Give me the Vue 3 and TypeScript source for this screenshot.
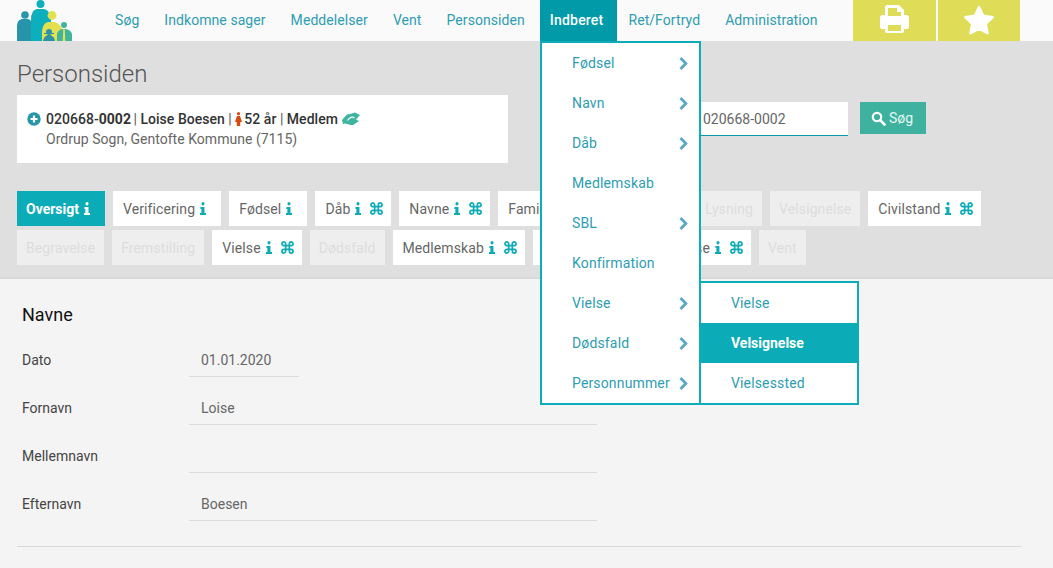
<script setup lang="ts">
interface Tab {
  label: string
  info?: boolean
  cmd?: boolean
  off?: boolean
  active?: boolean
}

const navItems = ['Søg', 'Indkomne sager', 'Meddelelser', 'Vent', 'Personsiden', 'Indberet', 'Ret/Fortryd', 'Administration']

const menuItems = [
  { label: 'Fødsel', more: true },
  { label: 'Navn', more: true },
  { label: 'Dåb', more: true },
  { label: 'Medlemskab', more: false },
  { label: 'SBL', more: true },
  { label: 'Konfirmation', more: false },
  { label: 'Vielse', more: true },
  { label: 'Dødsfald', more: true },
  { label: 'Personnummer', more: true }
]

const subItems = ['Vielse', 'Velsignelse', 'Vielsessted']

const tabs: Tab[] = [
  { label: 'Oversigt', info: true, active: true },
  { label: 'Verificering', info: true },
  { label: 'Fødsel', info: true },
  { label: 'Dåb', info: true, cmd: true },
  { label: 'Navne', info: true, cmd: true },
  { label: 'Familie', info: true },
  { label: 'Konfirmation', off: true },
  { label: 'Lysning', off: true },
  { label: 'Velsignelse', off: true },
  { label: 'Civilstand', info: true, cmd: true },
  { label: 'Begravelse', off: true },
  { label: 'Fremstilling', off: true },
  { label: 'Vielse', info: true, cmd: true },
  { label: 'Dødsfald', off: true },
  { label: 'Medlemskab', info: true, cmd: true },
  { label: 'Sognebånd', info: true },
  { label: 'Adresse', info: true, cmd: true },
  { label: 'Vent', off: true }
]

const fields = [
  { label: 'Dato', value: '01.01.2020', short: true },
  { label: 'Fornavn', value: 'Loise', short: false },
  { label: 'Mellemnavn', value: '', short: false },
  { label: 'Efternavn', value: 'Boesen', short: false }
]
</script>

<template>
  <div class="page">
    <header class="topbar">
      <svg class="logo" width="55" height="41" viewBox="0 0 55 41">
        <circle cx="8" cy="15" r="3.8" fill="#2795a9" />
        <path d="M0 41V26q0-6 5-7h6q4 1 4 7v15z" fill="#2795a9" />
        <circle cx="23.5" cy="4" r="4" fill="#0cb0bd" />
        <path d="M14 41V20q0-10 6-11h7q6 1 7 11v21z" fill="#0cb0bd" />
        <circle cx="35" cy="15.5" r="4.4" fill="#e2e04f" />
        <path d="M25 41V31q1-8 6-9h7q6 2 8 10v9z" fill="#e2e04f" />
        <circle cx="32" cy="32" r="3" fill="#2b93a8" />
        <path d="M27 33h10v1H27zM26 41q1-5 5-6h2q4 1 5 6z" fill="#2b93a8" />
        <circle cx="47" cy="25" r="3" fill="#3fb59f" />
        <path d="M40 41V34q1-4 5-5h4q5 1 6 5v7z" fill="#3fb59f" />
        <path d="M46.2 29h1.6l.5 12h-2.6z" fill="#e2e04f" />
      </svg>
      <nav class="nav">
        <a v-for="item in navItems" :key="item" class="nav-item" :class="{ current: item === 'Indberet' }">{{ item }}</a>
        <ul class="menu">
          <li v-for="item in menuItems" :key="item.label" class="menu-item">
            <span>{{ item.label }}</span>
            <svg v-if="item.more" class="chevron" width="9" height="13" viewBox="0 0 9 13">
              <path d="M1.500 1l5.300 5.500-5.300 5.500" fill="none" stroke="#5aa9c4" stroke-width="2.800" />
            </svg>
            <ul v-if="item.label === 'Vielse'" class="submenu">
              <li v-for="sub in subItems" :key="sub" class="sub-item" :class="{ current: sub === 'Velsignelse' }">{{ sub }}</li>
            </ul>
          </li>
        </ul>
      </nav>
      <div class="actions">
        <button class="action" aria-label="Print">
          <svg width="29" height="29" viewBox="0 0 29 29">
            <path
              fill="#fff"
              fill-rule="evenodd"
              d="M5 2a2 2 0 0 1 2-2h12l5 5v5h2a3 3 0 0 1 3 3v9a2 2 0 0 1-2 2h-3v2a2 2 0 0 1-2 2H7a2 2 0 0 1-2-2v-2H2a2 2 0 0 1-2-2v-9a3 3 0 0 1 3-3h2zM8 3v8h13V7h-4V3zM8 20v6h13v-6z"
            />
          </svg>
        </button>
        <button class="action" aria-label="Favorit">
          <svg width="32" height="30" viewBox="0 0 32 30">
            <path
              fill="#fff"
              stroke="#fff"
              stroke-width="2.4"
              stroke-linejoin="round"
              d="M16 2l4.2 8.8 9.6 1.3-7 6.7 1.700 9.500L16 23.700l-8.500 4.600 1.700-9.500-7-6.700 9.600-1.300z"
            />
          </svg>
        </button>
      </div>
    </header>

    <section class="panel">
      <h1 class="title">Personsiden</h1>
      <div class="person-row">
        <div class="person">
          <svg class="plus" width="14" height="14" viewBox="0 0 14 14">
            <circle cx="7" cy="7" r="6.700" fill="#2795a9" />
            <path d="M7 3.500v7M3.500 7h7" stroke="#fff" stroke-width="2.200" />
          </svg>
          <div>
            <div class="person-main">
              020668-<b>0002</b> <span class="sep first">|</span> Loise Boesen <span class="sep">|</span>
              <svg class="female" width="7" height="14" viewBox="0 0 7 14">
                <circle cx="3.500" cy="1.700" r="1.600" fill="#d9480f" />
                <path d="M2 4h3l2 6H5.200v4H1.800v-4H0z" fill="#d9480f" />
              </svg>
              52 år <span class="sep">|</span> Medlem
              <svg class="hands" width="18" height="13" viewBox="0 0 18 13">
                <path d="M0 8l5-5.500q1-.5 3-.5l5-1.500L18 3l-4 4.500 3 1.500-5 3.500q-2 1-5 0l-4-1-2 .5z" fill="#3fb59f" />
                <path d="M5.500 8.500Q9 3.500 12.500 6" fill="none" stroke="#fff" stroke-width="1.200" />
              </svg>
            </div>
            <div class="person-sub">Ordrup Sogn, Gentofte Kommune (7115)</div>
          </div>
        </div>
        <form class="search" @submit.prevent>
          <input class="search-input" value="020668-0002" />
          <button class="search-btn">
            <svg width="15" height="15" viewBox="0 0 15 15">
              <circle cx="6" cy="6" r="4.200" fill="none" stroke="#fff" stroke-width="2.200" />
              <path d="M9.200 9.200l4.300 4.300" stroke="#fff" stroke-width="2.600" stroke-linecap="round" />
            </svg>
            Søg
          </button>
        </form>
      </div>
      <div class="tabs">
        <a
          v-for="tab in tabs"
          :key="tab.label"
          class="tab"
          :class="{ off: tab.off, active: tab.active, both: tab.cmd }"
        >
          <span>{{ tab.label }}</span>
          <svg v-if="tab.info" class="ic-info" width="6" height="13" viewBox="0 0 7 13" preserveAspectRatio="none">
            <circle cx="3.500" cy="1.800" r="1.800" />
            <path d="M.5 5h4.700v6H7v2H0v-2h1.600V7H.5z" />
          </svg>
          <svg v-if="tab.cmd" class="ic-cmd" width="13" height="13" viewBox="0 0 14 14">
            <path d="M5 5V3a2 2 0 1 0-2 2h8a2 2 0 1 0-2-2v8a2 2 0 1 0 2-2H3a2 2 0 1 0 2 2z" />
          </svg>
        </a>
      </div>
    </section>

    <main class="content">
      <h2 class="heading">Navne</h2>
      <div v-for="field in fields" :key="field.label" class="field">
        <label class="field-label">{{ field.label }}</label>
        <div class="field-value" :class="{ short: field.short }">{{ field.value }}</div>
      </div>
      <hr class="rule" />
    </main>
  </div>
</template>

<style>
html,
body {
  margin: 0;
  background: #f4f4f4;
}
</style>

<style scoped>
.page {
  width: 1053px;
  height: 568px;
  overflow: hidden;
  font-family: Roboto, "Liberation Sans", sans-serif;
  font-size: 14px;
  color: #666;
  background: #f4f4f4;
}

/* top bar */
.topbar {
  display: flex;
  height: 41px;
  background: #fafafa;
}

.logo {
  flex-shrink: 0;
  margin-left: 17px;
}

.nav {
  position: relative;
  display: flex;
  margin-left: 33px;
}

.nav-item {
  padding: 0 14px 0 10px;
  margin-right: 1px;
  line-height: 41px;
  color: #2e9db1;
  letter-spacing: 0.07px;
  white-space: nowrap;
}

.nav-item.current {
  background: #009aa8;
  color: #fff;
  font-weight: 500;
  letter-spacing: 0.2px;
}

/* dropdown */
.menu {
  position: absolute;
  top: 41px;
  left: 435px;
  z-index: 10;
  width: 157px;
  margin: 0;
  padding: 0;
  list-style: none;
  background: #fff;
  border: 2px solid #0cadb9;
}

.menu-item {
  position: relative;
  display: flex;
  align-items: center;
  justify-content: space-between;
  height: 40px;
  padding: 0 11px 0 30px;
  color: #2e9db1;
  letter-spacing: 0.15px;
}

.submenu {
  position: absolute;
  top: -2px;
  left: 159px;
  width: 156px;
  margin: 0;
  padding: 0;
  list-style: none;
  background: #fff;
  border: 2px solid #0cadb9;
  border-left: 0;
}

.sub-item {
  height: 40px;
  padding-left: 30px;
  line-height: 40px;
  color: #2e9db1;
}

.sub-item.current {
  background: #0bacb8;
  color: #fff;
  font-weight: 700;
  letter-spacing: 0;
}

.actions {
  display: flex;
  gap: 2px;
  margin-left: auto;
  margin-right: 33px;
}

.action {
  display: flex;
  align-items: center;
  justify-content: center;
  width: 83px;
  height: 41px;
  padding: 0 0 2px;
  border: 0;
  background: #dfdd57;
}

.action + .action {
  width: 82px;
}

/* grey panel */
.panel {
  padding: 0 17px 12px;
  background: #dfdfdf;
  border-bottom: 2px solid #d8d8d8;
}

.title {
  margin: 0;
  padding: 19px 0 7px;
  font-size: 24px;
  font-weight: 300;
  line-height: 28px;
  color: #555;
}

.person-row {
  display: flex;
  align-items: flex-start;
}

.person {
  display: flex;
  gap: 5px;
  box-sizing: border-box;
  width: 491px;
  height: 68px;
  padding: 14px 10px;
  background: #fff;
  line-height: 20px;
  letter-spacing: 0.03px;
}

.plus {
  flex-shrink: 0;
  margin-top: 3px;
}

.person-main {
  color: #333;
  font-weight: 500;
  white-space: nowrap;
}

.person-main b {
  font-weight: 700;
}

.sep {
  font-weight: 400;
  color: #555;
}

.sep.first {
  margin-left: -1px;
}

.female {
  vertical-align: -2px;
  margin: 0 -1px 0 3px;
}

.hands {
  vertical-align: -1px;
  margin-left: 1px;
}

.person-sub {
  color: #666;
}

.search {
  display: flex;
  align-items: flex-start;
  gap: 12px;
  margin: 7px 0 0 182px;
}

.search-input {
  box-sizing: border-box;
  width: 158px;
  height: 34px;
  padding: 1px 12px 0 13px;
  border: 0;
  border-bottom: 1px solid #0a9aa6;
  background: #fff;
  color: #666;
  font: inherit;
  outline: none;
}

.search-btn {
  display: flex;
  align-items: center;
  justify-content: center;
  gap: 3px;
  width: 66px;
  height: 32px;
  padding: 0 2px 0 0;
  border: 0;
  background: #3eb29f;
  color: #e4f6f3;
  font: inherit;
}

/* tabs */
.tabs {
  display: flex;
  flex-wrap: wrap;
  gap: 4px 8px;
  margin-top: 28px;
}

.tab {
  display: flex;
  align-items: center;
  height: 35px;
  padding: 0 15px 0 10px;
  background: #fff;
  color: #666;
  letter-spacing: 0.1px;
  white-space: nowrap;
}

.tab.both {
  padding-right: 8px;
}

.tab.off {
  padding: 0 9px;
  background: #eee;
  color: #ddd;
}

.tab.active {
  padding-left: 9px;
  background: #0bacb8;
  color: #fff;
  font-weight: 700;
  letter-spacing: 0;
}

.ic-info {
  margin-left: 5px;
  fill: #0bacb8;
}

.active .ic-info {
  margin-left: 5px;
  fill: #fff;
}

.ic-cmd {
  margin-left: 9px;
  fill: none;
  stroke: #0bacb8;
  stroke-width: 1.800;
}

/* form */
.content {
  padding: 0 32px 0 17px;
}

.heading {
  margin: 0;
  padding: 24px 0 0 5px;
  font-size: 18px;
  font-weight: 400;
  line-height: 24px;
  color: #111;
}

.field {
  display: flex;
  height: 48px;
  box-sizing: border-box;
  padding-left: 5px;
}

.heading + .field {
  margin-top: 2px;
}

.field-label {
  flex-shrink: 0;
  width: 167px;
  padding-top: 21px;
  line-height: 20px;
  color: #444;
}

.field-value {
  box-sizing: border-box;
  width: 408px;
  height: 48px;
  padding: 21px 0 0 12px;
  line-height: 20px;
  border-bottom: 1px solid #ddd;
  color: #666;
}

.field-value.short {
  width: 110px;
}

.rule {
  height: 0;
  margin: 25px 0 0;
  border: 0;
  border-top: 1px solid #d8d8d8;
}
</style>
